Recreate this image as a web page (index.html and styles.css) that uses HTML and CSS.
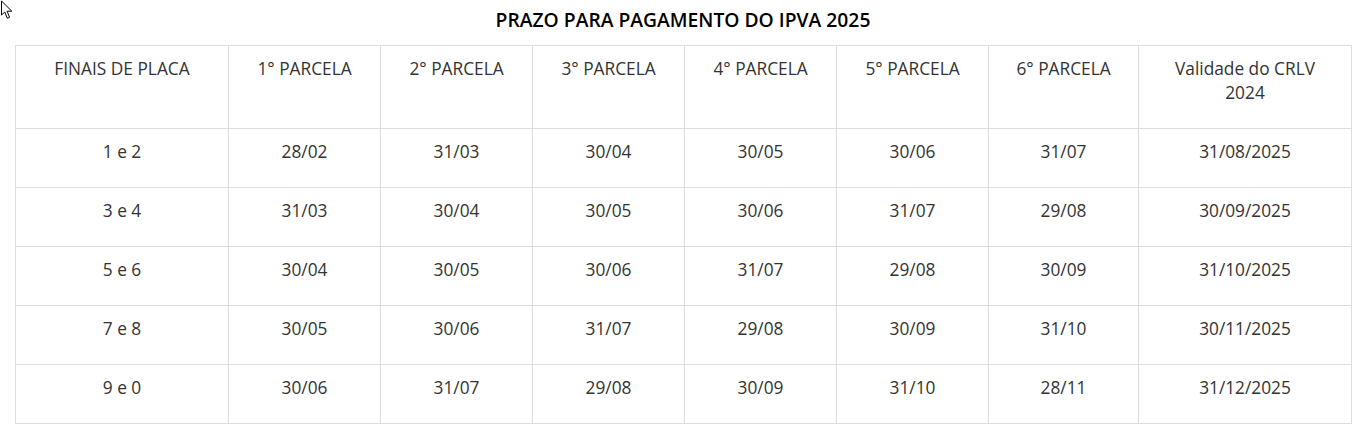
FILE: index.html
```html
<!DOCTYPE html>
<html lang="pt-BR">
<head>
<meta charset="utf-8">
<link rel="stylesheet" href="styles.css">
</head>
<body>
<svg class="cursor" width="14" height="21" viewBox="0 0 14 21"><path d="M1.5 1 L1.5 15 L4.8 12 L7.3 18.3 L9.6 17.3 L7.1 11.2 L11.8 11.2 Z" fill="#fff" stroke="#000" stroke-width="1" stroke-linejoin="round"/></svg>
<main class="page">
  <h2 class="title">PRAZO PARA PAGAMENTO DO IPVA 2025</h2>
  <table class="prazo">
    <colgroup>
      <col class="c-wide"><col class="c-mid"><col class="c-mid"><col class="c-mid"><col class="c-mid"><col class="c-mid"><col class="c-narrow"><col class="c-wide">
    </colgroup>
    <thead>
      <tr><td>FINAIS DE PLACA</td><td>1° PARCELA</td><td>2° PARCELA</td><td>3° PARCELA</td><td>4° PARCELA</td><td>5° PARCELA</td><td>6° PARCELA</td><td>Validade do CRLV<br>2024</td></tr>
    </thead>
    <tbody>
      <tr><td>1 e 2</td><td>28/02</td><td>31/03</td><td>30/04</td><td>30/05</td><td>30/06</td><td>31/07</td><td>31/08/2025</td></tr>
      <tr><td>3 e 4</td><td>31/03</td><td>30/04</td><td>30/05</td><td>30/06</td><td>31/07</td><td>29/08</td><td>30/09/2025</td></tr>
      <tr><td>5 e 6</td><td>30/04</td><td>30/05</td><td>30/06</td><td>31/07</td><td>29/08</td><td>30/09</td><td>31/10/2025</td></tr>
      <tr><td>7 e 8</td><td>30/05</td><td>30/06</td><td>31/07</td><td>29/08</td><td>30/09</td><td>31/10</td><td>30/11/2025</td></tr>
      <tr><td>9 e 0</td><td>30/06</td><td>31/07</td><td>29/08</td><td>30/09</td><td>31/10</td><td>28/11</td><td>31/12/2025</td></tr>
    </tbody>
  </table>
</main>
</body>
</html>
```
FILE: styles.css
```css
html, body {
  margin: 0;
  padding: 0;
  background: #fff;
}
body {
  font-family: "Open Sans", "Noto Sans", sans-serif;
  color: #333;
}
.cursor {
  position: absolute;
  left: 0;
  top: 0;
}
.page {
  padding: 8px 21px 0 15px;
}
.title {
  margin: 0 0 13px;
  text-align: center;
  font-size: 19.3px;
  font-weight: 600;
  line-height: 24px;
  color: #000;
}
.prazo {
  width: 1337px;
  border-collapse: collapse;
  table-layout: fixed;
  font-size: 17.3px;
  line-height: 24px;
}
.prazo td {
  border: 1px solid #dddddd;
  padding: 11px 6px 23px;
  text-align: center;
  vertical-align: top;
}
.c-wide { width: 213px; }
.c-mid { width: 152px; }
.c-narrow { width: 150px; }
```
